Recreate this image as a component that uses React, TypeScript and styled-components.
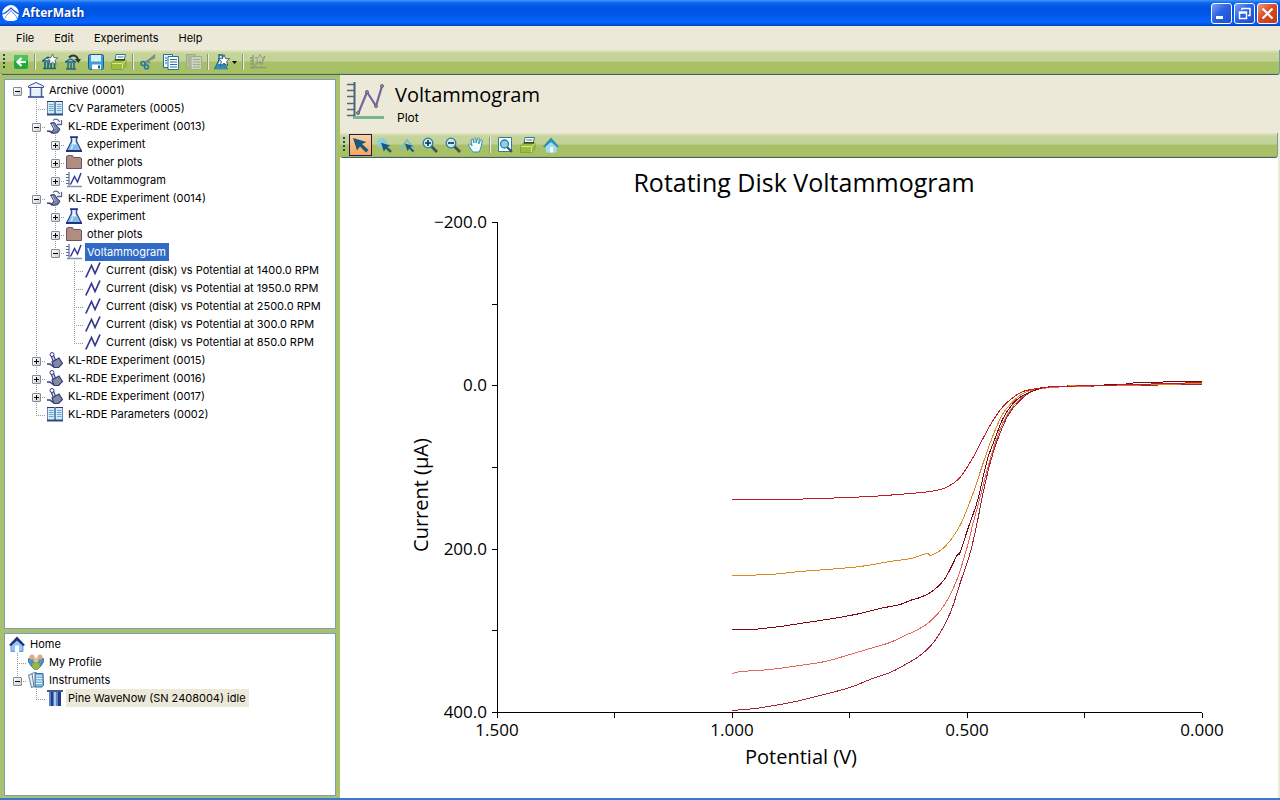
import React, { useState } from "react";
import styled, { createGlobalStyle, css } from "styled-components";

const uiFont = `Inter, "Noto Sans", sans-serif`;
const plotFont = `"Open Sans", "Noto Sans", sans-serif`;
const beige = "#ece9d8";
const green = "#a9c16c";

const GlobalStyle = createGlobalStyle`
  * { box-sizing: border-box; }
  body { margin: 0; background: ${beige}; font-family: ${uiFont}; font-size: 11px; color: #000; }
  button { font: inherit; color: inherit; border: 0; padding: 0; background: none; }
  svg { display: block; flex: none; }
`;

const Window = styled.div`
  display: flex;
  flex-direction: column;
  height: 100vh;
  border-bottom: 2px solid #3b77cf;
`;

const TitleBar = styled.header`
  display: flex;
  align-items: center;
  flex: none;
  gap: 2px;
  height: 26px;
  padding: 0 2px 0 2px;
  background: linear-gradient(#3f95ff 0, #0b63ee 3px, #0054e3 8px, #0058e8 15px, #0566ff 22px, #0458e6 24px, #0341bb 26px);
`;

const AppName = styled.h1`
  flex: 1;
  margin: 0;
  font-family: "Noto Sans", sans-serif;
  font-size: 12px;
  line-height: 18px;
  font-weight: 700;
  color: #fff;
  text-shadow: 1px 1px 0 #0a2f8c;
`;

const Controls = styled.div`
  display: flex;
  gap: 2px;
`;

const ControlButton = styled.button<{ $close?: boolean }>`
  display: grid;
  place-items: center;
  width: 21px;
  height: 21px;
  border: 1px solid #fff;
  border-radius: 3px;
  background: ${(p) =>
    p.$close
      ? "linear-gradient(135deg, #ee9a7c, #dc4a23 45%, #c23a14)"
      : "linear-gradient(135deg, #7ba0f5, #2c62e4 45%, #1c4fd4)"};
`;

const MenuBar = styled.nav`
  display: flex;
  flex: none;
  gap: 20px;
  height: 24px;
  padding: 0 16px;
  align-items: center;
`;

const MenuItem = styled.button`
  line-height: 18px;
`;

const Bar = styled.div`
  display: flex;
  flex: none;
  align-items: stretch;
  height: 25px;
  padding: 1px 0 1px 3px;
  border-bottom: 1px solid #42665a;
  border-right: 1px solid #6f9fa0;
  border-radius: 0 0 3px 3px;
  background: linear-gradient(#e3e6c2 0, #d3dcae 2px, #c5d59c 3px, #c3d396 11px, #a9c16a 12px, #a6c062 23px, #94a97c 24px);
`;

const Grip = styled.span`
  width: 2px;
  margin: 3px 4px 3px 0;
  background: repeating-linear-gradient(#2c4a40 0 2px, transparent 2px 4px);
`;

const Tool = styled.button<{ $active?: boolean; $wide?: boolean }>`
  display: flex;
  align-items: center;
  justify-content: center;
  gap: 2px;
  width: ${(p) => (p.$wide ? 29 : 23)}px;
  ${(p) =>
    p.$active &&
    css`
      border: 1px solid #1b1b5c;
      background: linear-gradient(#fdd0a0, #f9a45c);
    `}
`;

const Divider = styled.span`
  width: 2px;
  margin: 3px 2px;
  background: linear-gradient(90deg, #7e9a86 50%, #e9efd8 50%);
`;

const Body = styled.div`
  display: flex;
  flex: 1;
  min-height: 0;
  background: ${green};
`;

const Sidebar = styled.aside`
  display: flex;
  flex-direction: column;
  flex: 0 0 340px;
  min-width: 0;
  gap: 4px;
  padding: 4px 4px 2px 4px;
`;

const Panel = styled.section<{ $short?: boolean }>`
  flex: ${(p) => (p.$short ? "0 0 163px" : "1")};
  min-height: 0;
  overflow: hidden;
  padding: 1px 3px;
  border: 1px solid #7f9db9;
  background: #fff;
`;

const Branch = styled.ul`
  list-style: none;
  margin: 0;
  padding: 0;
`;

const Row = styled.div`
  display: flex;
  height: 18px;
`;

const dots = (dir: string) => `repeating-linear-gradient(${dir}, #9a9a9a 0 1px, transparent 1px 2px)`;

const Guide = styled.span<{ $line?: "full" | "half"; $arm?: boolean }>`
  flex: none;
  width: 19px;
  height: 18px;
  padding: 6px 5px 0 5px;
  background-repeat: no-repeat;
  background-image: ${(p) => (p.$line ? dots("180deg") : "none")}, ${(p) => (p.$arm ? dots("90deg") : "none")};
  background-size: 1px ${(p) => (p.$line === "half" ? "10px" : "18px")}, 10px 1px;
  background-position: 9px 0, 9px 10px;
`;

const Toggle = styled.button`
  display: block;
  width: 9px;
  height: 9px;
  border: 1px solid #7b8c9c;
  border-radius: 1px;
  background: linear-gradient(135deg, #fff, #d2cfc4);
`;

const IconCell = styled.span`
  flex: none;
  width: 20px;
  padding: 1px 0 0 1px;
`;

const Label = styled.span<{ $look?: "selected" | "idle" }>`
  padding: 0 3px 0 2px;
  line-height: 18px;
  white-space: nowrap;
  ${(p) => p.$look === "selected" && "background: #316ac5; color: #fff;"}
  ${(p) => p.$look === "idle" && `background: ${beige};`}
`;

const Main = styled.main`
  display: flex;
  flex-direction: column;
  flex: 1;
  min-width: 0;
  border-right: 2px solid ${beige};
  background: #fff;
`;

const DocHeader = styled.header`
  display: flex;
  flex: none;
  gap: 10px;
  height: 58px;
  padding: 6px 6px 0 6px;
  background: ${beige};
`;

const DocTitle = styled.h2`
  margin: 0;
  font-family: ${plotFont};
  font-size: 20px;
  line-height: 28px;
  font-weight: 400;
`;

const DocKind = styled.p`
  margin: 0;
  padding-left: 2px;
  font-size: 12px;
  line-height: 18px;
`;

const Chart = styled.svg`
  && {
    flex: 1;
  }
  width: 100%;
  min-height: 0;
  font-family: ${plotFont};
`;

/* ---------- icons ---------- */

const S = ({ children, size = 16 }: { children: React.ReactNode; size?: number }) => (
  <svg width={size} height={size} viewBox="0 0 16 16" aria-hidden="true">
    {children}
  </svg>
);

const LogoIcon = () => (
  <svg width="18" height="18" viewBox="0 0 18 18" aria-hidden="true">
    <path d="M1 13C-2 7 4 1 9 1s10 6 7 12c-1 4-4 4-7 4s-7 0-8-4z" fill="#fff" />
    <path d="M0 10c3 0 6-3 9-6 3 3 6 6 9 6M3 16c0-4 3-5 6-9 3 4 6 5 6 9" fill="none" stroke="#1a5fe0" strokeWidth="1.2" />
    <path d="M3 16c0-4 3-5 6-9 3 4 6 5 6 9z" fill="#fff" />
  </svg>
);

const star = "M0-6L1.700-2 6-1.800 2.700 1 4 5.500 0 3-4 5.500-2.700 1-6-1.800-1.700-2z";

const BackIcon = () => (
  <S>
    <rect x="1" y="1" width="14" height="14" rx="2" fill="#22a83c" />
    <rect x="1" y="1" width="14" height="6" rx="2" fill="#4cc25c" />
    <path d="M13 8H5M8.500 4L4.500 8l4 4" fill="none" stroke="#fff" strokeWidth="2.200" />
  </S>
);
const NewArchiveIcon = () => (
  <S>
    <path d="M0 7l6-4 6 4z" fill="#bfe0ee" stroke="#1c6789" strokeWidth="1.400" />
    <path d="M1 14.500h13M3 8v6M6 8v6M9 8v6M12.500 9v5" fill="none" stroke="#1c6789" strokeWidth="1.700" />
    <path d={star} transform="translate(10.500 5.500) scale(.9)" fill="#fff" stroke="#1b3d4c" strokeWidth=".7" />
  </S>
);
const OpenArchiveIcon = () => (
  <S>
    <path d="M0 8l5.500-3L11 8z" fill="#9fd0e0" stroke="#1c6789" strokeWidth="1.300" />
    <path d="M1 15h10M3 9v6M6 9v6M9 9v6" fill="none" stroke="#1c6789" strokeWidth="1.500" />
    <path d="M4 3.500c3-3 7-3 9 1.500" fill="none" stroke="#2a3a3c" strokeWidth="2" />
    <path d="M9.500 5H16l-2.500 4z" fill="#2a3a3c" />
  </S>
);
const SaveIcon = () => (
  <S>
    <rect x=".5" y=".5" width="15" height="15" rx="2" fill="#3f9ed2" stroke="#155f8c" />
    <rect x="3" y="1" width="10" height="6.500" fill="#d9eff9" />
    <rect x="4" y="10.500" width="9" height="5" fill="#fff" />
    <rect x="10" y="11.500" width="2" height="3" fill="#1d5d82" />
  </S>
);
const PrintIcon = () => (
  <S>
    <path d="M5 .5h9.500L13 7H4z" fill="#fff" stroke="#2a7a99" />
    <path d="M6.500 3h6" stroke="#2a7a99" />
    <path d="M.5 9l3-3H15v6l-3.500 3.500H.500z" fill="#9cbc3e" stroke="#86a336" />
    <path d="M1 9.500h10.500v5.500M11.500 9.500L15 6.500" fill="none" stroke="#d5e593" />
    <path d="M4 5.800h10" stroke="#34441a" strokeWidth="1.600" />
  </S>
);
const CutIcon = () => (
  <S>
    <path d="M15 1L5 10M10 9L7 7l8-4" stroke="#7c8d86" strokeWidth="2" fill="none" />
    <circle cx="3" cy="9.500" r="2" fill="none" stroke="#2779a0" strokeWidth="1.600" />
    <circle cx="6.500" cy="13" r="2" fill="none" stroke="#2779a0" strokeWidth="1.600" />
  </S>
);
const CopyIcon = ({ dim }: { dim?: boolean }) => {
  const line = dim ? "#a0ad8c" : "#2b6f9c";
  return (
    <S>
      <path d="M.5.500h9v13h-9z" fill={dim ? "#b3bea0" : "#eef7fb"} stroke={line} />
      <path d="M5 2.500h10.500v13H5z" fill={dim ? "#cdd4bd" : "#fff"} stroke={line} />
      <path d="M7 5.500h7M7 8h7M7 10.500h7M7 13h7M2 4h2M2 6.500h2M2 9h2" stroke={line} strokeWidth="1.200" />
    </S>
  );
};
const NewExperimentIcon = () => (
  <S>
    <path d="M4 1h5M5 2v4l-4 8.500h12L8.500 7V2" fill="#cfe9f5" stroke="#1c6789" strokeWidth="1.300" />
    <path d="M3 10h7l3 5H1z" fill="#2c8cc0" />
    <path d={star} transform="translate(10 6.500) scale(.95)" fill="#fff" stroke="#1b3d4c" strokeWidth=".8" />
  </S>
);
const Caret = () => (
  <svg width="5" height="3" viewBox="0 0 5 3" aria-hidden="true">
    <path d="M0 0h5L2.500 3z" fill="#000" />
  </svg>
);
const NewPlotIcon = () => (
  <S>
    <path d="M3 1v14M0 13.500h16M0 4h3M0 7h3M0 10h3M5 12l3-5 3 3 4-8" fill="none" stroke="#8c9a76" strokeWidth="1.300" />
    <path d={star} transform="translate(10 5) scale(.8)" fill="#c4d0a6" stroke="#8c9a76" />
  </S>
);

const cursor = "M0 1l13.500 4-4.500 2 6.500 6-2.500 2.500L7 9.500 4 13.500z";
const PointerIcon = () => (
  <S>
    <path d={cursor} fill="#155a7c" />
  </S>
);
const SelectAreaIcon = () => (
  <S>
    <circle cx="6" cy="6" r="5" fill="#8fcbe0" />
    <path d={cursor} transform="translate(5 5) scale(.7)" fill="#155a7c" />
  </S>
);
const SelectTraceIcon = () => (
  <S>
    <path d="M1 13L8 3l7 9" fill="none" stroke="#78bcd2" strokeWidth="1.800" />
    <path d={cursor} transform="translate(6 6) scale(.6)" fill="#155a7c" />
  </S>
);
const ZoomIcon = ({ plus }: { plus?: boolean }) => (
  <S>
    <path d="M9 9l6 6" stroke="#444f4f" strokeWidth="2.600" />
    <circle cx="6" cy="6" r="4.800" fill="#c7ebf7" stroke="#2a7ea3" strokeWidth="1.300" />
    <path d={plus ? "M3 6h6M6 3v6" : "M3 6h6"} stroke="#15303c" strokeWidth="1.600" />
  </S>
);
const HandIcon = () => (
  <S>
    <path
      d="M5 15C3 12 1 10 .6 7.600 1 6.500 2.500 7 4 9L3 3c.5-1.200 1.600-1 2 0l1 3-.2-4.500c.5-1 1.700-1 2 0L8.200 6 9.500 1.500c.8-1 1.800-.4 1.700.6L10.700 7l2-4c.8-.8 1.800-.2 1.500.8-.6 3-1 8-3.200 11.200z"
      fill="#f3fbfe"
      stroke="#2f93bb"
    />
  </S>
);
const FitIcon = () => (
  <S>
    <path d="M1.500.5h13v14h-13z" fill="#fff" stroke="#2a7ea3" />
    <path d="M10 10l5 5" stroke="#444f4f" strokeWidth="2.200" />
    <circle cx="7.500" cy="7" r="4" fill="#8ed0e8" stroke="#2a7ea3" strokeWidth="1.300" />
  </S>
);
const HomeToolIcon = () => (
  <S>
    <path d="M3 8v7.500h10.500V8L8 3z" fill="#a5dbef" />
    <path d="M0 9.500L8 .5l8 9-1.500 1L8 5l-6.500 5.500z" fill="#2b90ba" />
    <path d="M7 10h3v5.500H7z" fill="#fff" />
  </S>
);

const ArchiveIcon = () => (
  <S>
    <path d="M.5 5.500V4L8 .5 15.500 4v1.500z" fill="#eef4fd" stroke="#3c4b90" />
    <path d="M2.500 6v9M13.500 6v9" stroke="#4a5fa8" strokeWidth="1.600" />
    <path d="M4 7h8v7H4z" fill="#e4f1fb" />
    <path d="M0 15h16" stroke="#3c4b90" strokeWidth="1.600" />
  </S>
);
const BookIcon = () => (
  <S>
    <path d="M.5 1.500h7v13h-7zM8.500 1.500h7v13h-7z" fill="#d3ecf7" stroke="#6d84b4" />
    <path d="M2 4.500h4.500M2 6.500h4.500M2 8.500h4.500M2 10.500h4.500M10 4.500h4.500M10 6.500h4.500M10 8.500h4.500M10 10.500h4.500" stroke="#62add0" />
    <path d="M0 14.500h16" stroke="#2b4a80" strokeWidth="2" />
    <path d="M0 1.500h7.500M8.500 1.500H16" stroke="#2b3a70" />
  </S>
);
const RunIcon = () => (
  <S>
    <path d="M6 2.500C8 .5 11 .5 12.500 4M14.500 2v4.500H10" fill="none" stroke="#5e688c" strokeWidth="1.300" />
    <path d="M3.500 5l4-.5 3 4.500 2.500 2-2 3.500-4 1-3-1 3-3.500z" fill="#76809f" stroke="#303a80" />
    <path d="M0 13l3.500.5 2 1.500" stroke="#303a80" strokeWidth="1.600" fill="none" />
    <path d="M5 6l3 5" stroke="#c5cde6" fill="none" />
  </S>
);
const StoredIcon = () => (
  <S>
    <path d="M5.500 4l2 5" stroke="#303a80" strokeWidth="3.600" strokeLinecap="round" />
    <path d="M5.500 4l2 5" stroke="#d8def5" strokeWidth="1.400" strokeLinecap="round" />
    <circle cx="5" cy="2.500" r="2" fill="#fff" stroke="#303a80" />
    <path d="M5 10l7-4 3.500 5.500-4 4H7z" fill="#838aa0" stroke="#303a80" strokeWidth="1.200" />
    <path d="M0 12h3l3 2.500" stroke="#303a80" strokeWidth="1.600" fill="none" />
  </S>
);
const FlaskIcon = () => (
  <S>
    <path d="M5.500 1.500v4L1 14.500h14l-4.500-9v-4" fill="#e4f3fc" stroke="#34469a" strokeWidth="1.500" />
    <path d="M4.500 8.500h7l2.500 5.500H2z" fill="#7fc1e8" />
    <path d="M6.500 9.500l-1 3.500" stroke="#fff" />
    <path d="M4 1.200h8M0 15h16" stroke="#27327e" strokeWidth="1.800" />
  </S>
);
const FolderIcon = () => (
  <S>
    <path d="M.5 14.500v-12l1.500-1h4.500l1 2H14l1.500 1v10z" fill="#b18d80" stroke="#6b5468" />
  </S>
);
const PlotIcon = () => (
  <S>
    <path d="M3 0v15M0 2.500h3M0 5.500h3M0 8.500h3M0 11.500h3" stroke="#5b6da0" strokeWidth="1.200" />
    <path d="M1 14.500h15" stroke="#7e95b4" strokeWidth="1.500" />
    <path d="M4.500 12.500L8.500 4.500l3 5.500L15 1" fill="none" stroke="#34389a" strokeWidth="1.500" />
  </S>
);
const TraceIcon = () => (
  <S>
    <path d="M.8 15.500L6.500 3.500l3.500 8L15 .5" fill="none" stroke="#34388c" strokeWidth="1.700" />
  </S>
);
const HomeIcon = () => (
  <S>
    <path d="M2 8v7.500h12V8L8 3z" fill="#93c6ee" stroke="#5f9bd0" />
    <path d="M0 9l8-8.500L16 9l-2 1L8 4.500 2 10z" fill="#1f2f86" />
    <path d="M6 9.500h4V16H6z" fill="#fff" />
  </S>
);
const ProfileIcon = () => (
  <S>
    <path d="M.5 4.500h6v9L3 12l-2.500-4zM15.500 4.500h-6v9L13 12l2.500-4z" fill="#4d93cf" stroke="#3a6a9c" strokeWidth=".8" />
    <circle cx="4" cy="3" r="2.600" fill="#d9ae86" />
    <circle cx="12" cy="3" r="2.600" fill="#d9ae86" />
    <path d="M4 9l4-1 4 1v4l-3 3H7l-3-3z" fill="#93bb55" stroke="#688d3a" strokeWidth=".8" />
    <circle cx="8" cy="6" r="2.500" fill="#e3bf95" />
  </S>
);
const InstrumentsIcon = () => (
  <S>
    <path d="M.5 3l4-1.500 2 13-3 1z" fill="#e7eef8" stroke="#65799c" />
    <path d="M4 1.500L8 0l2 14-4 1z" fill="#fff" stroke="#65799c" />
    <path d="M7 1.500h8l.5 12L14 15H7z" fill="#7db7dd" stroke="#3c6a9c" />
    <path d="M8 4h6M8 6.500h6M8 9h6M8 11.500h6" stroke="#e9f6fd" />
  </S>
);
const WaveNowIcon = () => (
  <S>
    <path d="M0 0h16v2H0z" fill="#4a5794" />
    <path d="M2 2h12v14H2z" fill="#5785c8" />
    <path d="M4 2h2v14H4zM11 2h3v14h-3z" fill="#27388c" />
    <path d="M7 2h2v14H7z" fill="#a6c8ec" />
  </S>
);

/* ---------- tree ---------- */

type Node = {
  id: string;
  text: string;
  icon: React.ReactNode;
  look?: "selected" | "idle";
  expandable?: boolean;
  children?: Node[];
};

const rpm = ["1400.0", "1950.0", "2500.0", "300.0", "850.0"];

const experimentParts = (open: boolean, key: string): Node[] => [
  { id: key + "e", text: "experiment", icon: <FlaskIcon />, expandable: true },
  { id: key + "o", text: "other plots", icon: <FolderIcon />, expandable: true },
  {
    id: key + "v",
    text: "Voltammogram",
    icon: <PlotIcon />,
    expandable: true,
    look: open ? "selected" : undefined,
    children: open
      ? rpm.map((r) => ({ id: r, text: `Current (disk) vs Potential at ${r} RPM`, icon: <TraceIcon /> }))
      : undefined,
  },
];

const archive: Node = {
  id: "archive",
  text: "Archive (0001)",
  icon: <ArchiveIcon />,
  expandable: true,
  children: [
    { id: "cv", text: "CV Parameters (0005)", icon: <BookIcon /> },
    { id: "13", text: "KL-RDE Experiment (0013)", icon: <RunIcon />, expandable: true, children: experimentParts(false, "13") },
    { id: "14", text: "KL-RDE Experiment (0014)", icon: <RunIcon />, expandable: true, children: experimentParts(true, "14") },
    { id: "15", text: "KL-RDE Experiment (0015)", icon: <StoredIcon />, expandable: true },
    { id: "16", text: "KL-RDE Experiment (0016)", icon: <StoredIcon />, expandable: true },
    { id: "17", text: "KL-RDE Experiment (0017)", icon: <StoredIcon />, expandable: true },
    { id: "kp", text: "KL-RDE Parameters (0002)", icon: <BookIcon /> },
  ],
};

const home: Node = {
  id: "home",
  text: "Home",
  icon: <HomeIcon />,
  children: [
    { id: "profile", text: "My Profile", icon: <ProfileIcon /> },
    {
      id: "instruments",
      text: "Instruments",
      icon: <InstrumentsIcon />,
      expandable: true,
      children: [{ id: "wn", text: "Pine WaveNow (SN 2408004) idle", icon: <WaveNowIcon />, look: "idle" }],
    },
  ],
};

type ItemProps = { node: Node; trail?: boolean[]; last?: boolean; root?: boolean };

const TreeItem = ({ node, trail = [], last = true, root }: ItemProps) => {
  const [open, setOpen] = useState(!!node.children);
  const showJoint = !root || node.expandable;
  const childTrail = root ? (node.expandable ? [false] : []) : [...trail, !last];
  return (
    <li role="treeitem" aria-expanded={node.expandable ? open : undefined} aria-selected={node.look === "selected"}>
      <Row>
        {trail.map((on, i) => (
          <Guide key={i} $line={on ? "full" : undefined} />
        ))}
        {showJoint && (
          <Guide $line={root ? undefined : last ? "half" : "full"} $arm={!root}>
            {node.expandable && (
              <Toggle aria-label={(open ? "Collapse " : "Expand ") + node.text} onClick={() => setOpen(!open)}>
                <svg width="7" height="7" viewBox="0 0 7 7" shapeRendering="crispEdges" aria-hidden="true">
                  <path d={open ? "M1 3.500h5" : "M1 3.500h5M3.500 1v5"} stroke="#000" />
                </svg>
              </Toggle>
            )}
          </Guide>
        )}
        <IconCell>{node.icon}</IconCell>
        <Label $look={node.look}>{node.text}</Label>
      </Row>
      {open && node.children && (
        <Branch role="group">
          {node.children.map((c, i) => (
            <TreeItem key={c.id} node={c} trail={childTrail} last={i === node.children!.length - 1} />
          ))}
        </Branch>
      )}
    </li>
  );
};

/* ---------- chart ---------- */

type Pt = [number, number];

const traces: { color: string; points: Pt[] }[] = [
  {
    color: "#9c2434",
    points: [[732, 710], [755, 708], [780, 704], [800, 700], [820, 695], [850, 687], [870, 679], [890, 672], [900, 667], [920, 655], [935, 640], [950, 613], [961, 580], [970, 553], [977, 523], [983, 493], [990, 463], [998, 438], [1008, 415], [1018, 402], [1030, 392], [1045, 387], [1070, 386], [1120, 385], [1202, 384]],
  },
  {
    color: "#e06a5a",
    points: [[732, 673], [742, 671], [770, 669], [800, 665], [825, 661], [850, 654], [870, 648], [890, 642], [905, 635], [918, 629], [930, 621], [944, 605], [957, 579], [967, 547], [973, 523], [980, 497], [987, 470], [995, 443], [1003, 422], [1013, 406], [1027, 393], [1042, 388], [1070, 386], [1120, 385], [1202, 383]],
  },
  {
    color: "#7a0a14",
    points: [[732, 629], [752, 629], [780, 626], [800, 623], [833, 618], [860, 613], [880, 608], [900, 604], [910, 600], [920, 597], [932, 591], [945, 578], [957, 555], [960, 552], [968, 528], [977, 502], [983, 477], [988, 457], [995, 438], [1003, 418], [1013, 403], [1023, 395], [1037, 389], [1055, 386], [1120, 384], [1140, 382], [1202, 381]],
  },
  {
    color: "#d98a22",
    points: [[732, 575], [770, 574], [800, 571], [827, 569], [860, 566], [890, 561], [911, 558], [927, 553], [931, 555], [945, 546], [960, 525], [973, 493], [983, 463], [993, 435], [1003, 413], [1013, 401], [1023, 393], [1037, 388], [1055, 386], [1090, 385], [1150, 384], [1202, 383]],
  },
  {
    color: "#c21c22",
    points: [[732, 499], [780, 499], [820, 498], [870, 496], [910, 493], [930, 491], [946, 487], [960, 477], [973, 457], [983, 438], [993, 420], [1003, 406], [1013, 397], [1023, 391], [1037, 388], [1055, 386], [1100, 385], [1202, 382]],
  },
];

const smooth = (p: Pt[]) =>
  p.reduce((d, [x, y], i) => {
    if (i === 0) return `M${x} ${y}`;
    const a = p[Math.max(0, i - 2)];
    const b = p[i - 1];
    const n = p[Math.min(p.length - 1, i + 1)];
    return `${d}C${b[0] + (x - a[0]) / 6} ${b[1] + (y - a[1]) / 6} ${x - (n[0] - b[0]) / 6} ${y - (n[1] - b[1]) / 6} ${x} ${y}`;
  }, "");

const yLabels: [string, number][] = [["−200.0", 222], ["0.0", 385], ["200.0", 549], ["400.0", 712]];
const xLabels: [string, number][] = [["1.500", 497], ["1.000", 732], ["0.500", 967], ["0.000", 1202]];
const yTicks = [222, 304, 385, 467, 549, 630, 712];
const xTicks = [497, 614, 732, 849, 967, 1084, 1202];

const VoltammogramChart = () => (
  <Chart viewBox="340 158 938 640" role="img" aria-label="Rotating Disk Voltammogram">
    <text x="804" y="192" fontSize="25" textAnchor="middle">
      Rotating Disk Voltammogram
    </text>
    <g stroke="#000" shapeRendering="crispEdges" fill="none">
      <path d="M497.500 222V712.500H1202" />
      {yTicks.map((y) => (
        <path key={y} d={`M492 ${y + 0.5}h5`} />
      ))}
      {xTicks.map((x) => (
        <path key={x} d={`M${x + 0.5} 713v5`} />
      ))}
    </g>
    <g fontSize="17">
      {yLabels.map(([t, y]) => (
        <text key={t} x="487" y={y + 6} textAnchor="end">
          {t}
        </text>
      ))}
      {xLabels.map(([t, x]) => (
        <text key={t} x={x} y="736" textAnchor="middle">
          {t}
        </text>
      ))}
    </g>
    <g fontSize="20" textAnchor="middle">
      <text x="801" y="764">
        Potential (V)
      </text>
      <text transform="translate(428 495) rotate(-90)">Current (µA)</text>
    </g>
    <g fill="none" shapeRendering="crispEdges" transform="translate(0 .5)">
      {traces.map((t) => (
        <path key={t.color} d={smooth(t.points)} stroke={t.color} />
      ))}
    </g>
  </Chart>
);

const HeaderPlotIcon = () => (
  <svg width="39" height="40" viewBox="0 0 39 40" aria-hidden="true">
    <path d="M1 3.500h7M1 9.500h7M1 15.500h7M1 22.500h7M1 28.500h7M1 34.500h7" stroke="#53687c" strokeWidth="1.500" />
    <path d="M8.500 1v37" stroke="#45647a" strokeWidth="2" />
    <path d="M8 36.500h30" stroke="#77b693" strokeWidth="3" />
    <path d="M12 33l9-22 9 14 6-20" fill="none" stroke="#7362a5" strokeWidth="2.200" />
    <g fill="#8d9c8b" stroke="#5f6b67">
      <circle cx="12" cy="32" r="1.500" />
      <circle cx="21" cy="11" r="1.500" />
      <circle cx="30" cy="25" r="1.500" />
      <circle cx="36" cy="5" r="1.500" />
    </g>
  </svg>
);

export default function App() {
  return (
    <Window>
      <GlobalStyle />
      <TitleBar>
        <LogoIcon />
        <AppName>AfterMath</AppName>
        <Controls>
          <ControlButton aria-label="Minimize">
            <svg width="13" height="13" viewBox="0 0 13 13" aria-hidden="true">
              <path d="M1 10.500h7" stroke="#fff" strokeWidth="3" />
            </svg>
          </ControlButton>
          <ControlButton aria-label="Restore">
            <svg width="13" height="13" viewBox="0 0 13 13" aria-hidden="true">
              <path d="M4 3V1.500h8v7h-2M1.500 5h7v6.500h-7zM1.500 6h7" fill="none" stroke="#fff" strokeWidth="1.500" />
            </svg>
          </ControlButton>
          <ControlButton aria-label="Close" $close>
            <svg width="13" height="13" viewBox="0 0 13 13" aria-hidden="true">
              <path d="M1.500 1.500l10 10M11.500 1.500l-10 10" stroke="#fff" strokeWidth="2.200" />
            </svg>
          </ControlButton>
        </Controls>
      </TitleBar>
      <MenuBar>
        {["File", "Edit", "Experiments", "Help"].map((m) => (
          <MenuItem key={m}>{m}</MenuItem>
        ))}
      </MenuBar>
      <Bar role="toolbar" aria-label="Main">
        <Grip />
        <Tool aria-label="Back"><BackIcon /></Tool>
        <Divider />
        <Tool aria-label="New archive"><NewArchiveIcon /></Tool>
        <Tool aria-label="Open archive"><OpenArchiveIcon /></Tool>
        <Tool aria-label="Save"><SaveIcon /></Tool>
        <Tool aria-label="Print"><PrintIcon /></Tool>
        <Divider />
        <Tool aria-label="Cut"><CutIcon /></Tool>
        <Tool aria-label="Copy"><CopyIcon /></Tool>
        <Tool aria-label="Paste" disabled><CopyIcon dim /></Tool>
        <Divider />
        <Tool aria-label="New experiment" $wide><NewExperimentIcon /><Caret /></Tool>
        <Divider />
        <Tool aria-label="New plot" disabled><NewPlotIcon /></Tool>
      </Bar>
      <Body>
        <Sidebar>
          <Panel>
            <Branch role="tree" aria-label="Archive">
              <TreeItem node={archive} root />
            </Branch>
          </Panel>
          <Panel $short>
            <Branch role="tree" aria-label="Home">
              <TreeItem node={home} root />
            </Branch>
          </Panel>
        </Sidebar>
        <Main>
          <DocHeader>
            <HeaderPlotIcon />
            <div>
              <DocTitle>Voltammogram</DocTitle>
              <DocKind>Plot</DocKind>
            </div>
          </DocHeader>
          <Bar role="toolbar" aria-label="Plot">
            <Grip />
            <Tool aria-label="Select" $active><PointerIcon /></Tool>
            <Tool aria-label="Select area"><SelectAreaIcon /></Tool>
            <Tool aria-label="Select trace"><SelectTraceIcon /></Tool>
            <Tool aria-label="Zoom in"><ZoomIcon plus /></Tool>
            <Tool aria-label="Zoom out"><ZoomIcon /></Tool>
            <Tool aria-label="Pan"><HandIcon /></Tool>
            <Divider />
            <Tool aria-label="Fit to window"><FitIcon /></Tool>
            <Tool aria-label="Print plot"><PrintIcon /></Tool>
            <Tool aria-label="Home view"><HomeToolIcon /></Tool>
          </Bar>
          <VoltammogramChart />
        </Main>
      </Body>
    </Window>
  );
}
